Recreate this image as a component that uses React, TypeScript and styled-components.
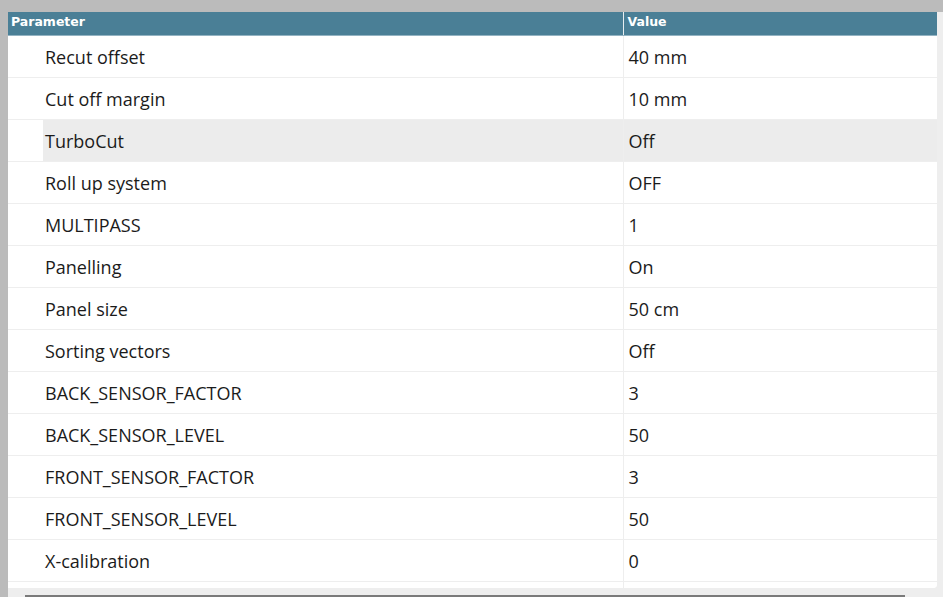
import React from "react";
import styled, { createGlobalStyle } from "styled-components";

const Global = createGlobalStyle`
  html, body { margin: 0; padding: 0; background: #bbbbbb; }
  body { font-family: "Open Sans", "DejaVu Sans", sans-serif; }
`;

const Frame = styled.div`
  padding: 12px 0 0 8px;
  height: 597px;
  box-sizing: border-box;
  overflow: hidden;
`;

const Panel = styled.div`
  background: #eeeeee;
  height: 585px;
  display: flex;
  flex-direction: column;
`;

const Card = styled.div`
  background: #ffffff;
  width: 929px;
  height: 576px;
  flex: none;
  border-bottom-right-radius: 4px;
  overflow: hidden;
`;

const ScrollThumb = styled.div`
  margin: 7px 0 0 17px;
  width: 880px;
  height: 2px;
  background: #7a7a7a;
`;

const Table = styled.table`
  width: 929px;
  border-collapse: collapse;
  table-layout: fixed;
`;

const HeadCell = styled.th<{ $divider?: boolean }>`
  height: 23px;
  box-sizing: border-box;
  padding: 0 0 3px ${(p) => (p.$divider ? "4px" : "3px")};
  background: #4a7f96;
  color: #ffffff;
  font-family: "DejaVu Sans", Verdana, sans-serif;
  font-weight: bold;
  font-size: 12.5px;
  text-align: left;
  border-bottom: 1px solid #93b3c2;
  border-left: ${(p) => (p.$divider ? "1px solid #e8eef1" : "none")};
`;

const Row = styled.tr<{ $active?: boolean }>`
  height: 42px;
  border-bottom: 1px solid #eeeeee;
  & > td:not(:first-child) {
    background: ${(p) => (p.$active ? "#ececec" : "#ffffff")};
  }
`;

const Indent = styled.td`
  padding: 0;
  background: #ffffff;
`;

const Cell = styled.td<{ $value?: boolean }>`
  padding: 2px 0 0 ${(p) => (p.$value ? "5px" : "2px")};
  font-size: 18px;
  color: #1b1b1b;
  white-space: nowrap;
  border-left: ${(p) => (p.$value ? "1px solid #eeeeee" : "none")};
`;

const rows: [string, string][] = [
  ["Recut offset", "40 mm"],
  ["Cut off margin", "10 mm"],
  ["TurboCut", "Off"],
  ["Roll up system", "OFF"],
  ["MULTIPASS", "1"],
  ["Panelling", "On"],
  ["Panel size", "50 cm"],
  ["Sorting vectors", "Off"],
  ["BACK_SENSOR_FACTOR", "3"],
  ["BACK_SENSOR_LEVEL", "50"],
  ["FRONT_SENSOR_FACTOR", "3"],
  ["FRONT_SENSOR_LEVEL", "50"],
  ["X-calibration", "0"],
  ["", ""],
];

export default function App() {
  return (
    <>
      <Global />
      <Frame>
        <Panel>
          <Card>
            <Table>
              <colgroup>
                <col style={{ width: 35 }} />
                <col style={{ width: 580 }} />
                <col />
              </colgroup>
              <thead>
                <tr>
                  <HeadCell colSpan={2}>Parameter</HeadCell>
                  <HeadCell $divider>Value</HeadCell>
                </tr>
              </thead>
              <tbody>
                {rows.map(([k, v], i) => (
                  <Row key={i} $active={k === "TurboCut"}>
                    <Indent />
                    <Cell>{k}</Cell>
                    <Cell $value>{v}</Cell>
                  </Row>
                ))}
              </tbody>
            </Table>
          </Card>
          <ScrollThumb />
        </Panel>
      </Frame>
    </>
  );
}
